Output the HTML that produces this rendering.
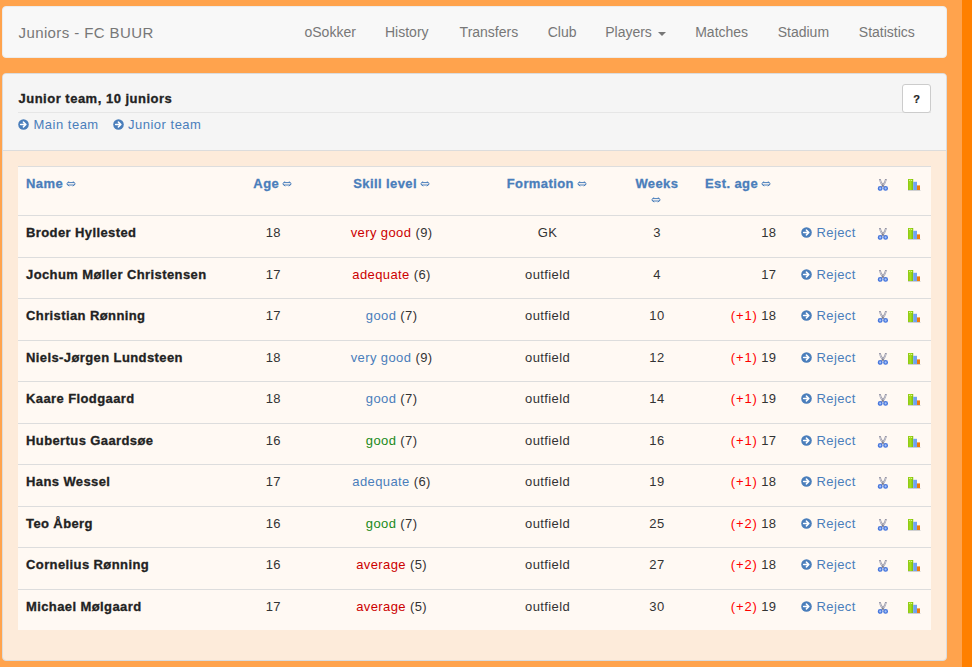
<!DOCTYPE html>
<html><head><meta charset="utf-8">
<style>
*{box-sizing:border-box;margin:0;padding:0}
html,body{width:972px;height:667px;overflow:hidden}
body{background:#ff8000;font-family:"Liberation Sans",sans-serif;position:relative}
#wrap{position:absolute;left:0;top:0;width:962px;height:667px;background:#ffa34d}
.nav{position:absolute;left:2px;top:6px;width:945px;height:52px;background:#f8f8f8;border:1px solid #ececec;border-radius:4px}
.brand{position:absolute;left:15.5px;top:17px;font-size:15px;line-height:18px;color:#777;letter-spacing:0.4px;white-space:nowrap}
.ni{position:absolute;top:23.5px;font-size:14px;line-height:17px;color:#777;white-space:nowrap;letter-spacing:0px}
.caret{position:absolute;left:658px;top:31.5px;width:0;height:0;border-left:4px solid transparent;border-right:4px solid transparent;border-top:4px solid #777}
.panel{position:absolute;left:2px;top:73px;width:945px;height:588px;background:#fdebda;border:1px solid #dcdcdc;border-radius:4px;overflow:hidden}
.ph{position:absolute;left:0;top:0;width:943px;height:77px;background:#f5f5f5;border-bottom:1px solid #dcdcdc}
.h3{position:absolute;left:18.5px;top:90.5px;font-size:13px;line-height:16px;font-weight:bold;color:#222;letter-spacing:0.5px;white-space:nowrap;-webkit-text-stroke:0.3px #222}
.hr{position:absolute;left:18px;top:112px;width:913px;height:1px;background:#e6e6e6}
.lnk{position:absolute;top:117px;font-size:13px;line-height:16px;color:#4a7ebb;white-space:nowrap;letter-spacing:0.5px}
.ic{position:absolute;line-height:0}
.ic svg{display:block}
.help{position:absolute;left:902px;top:84px;width:29px;height:29px;background:#fff;border:1px solid #ccc;border-radius:3px;font-size:11px;font-weight:bold;color:#222;text-align:center;line-height:28px;-webkit-text-stroke:0.2px #222}
.tbl{position:absolute;left:18px;top:166px;width:913px;height:464px;background:#fff9f3;border-top:1px solid #ddd}
.rl{position:absolute;left:18px;width:913px;height:1px;background:#ddd}
.t{position:absolute;font-size:13px;line-height:16px;color:#333;white-space:nowrap;letter-spacing:0.4px}
.th{font-weight:bold;color:#4a7ebb;-webkit-text-stroke:0.3px #4a7ebb}
.arr{vertical-align:0.5px;margin-left:-1px}
.b{font-weight:bold;color:#222;-webkit-text-stroke:0.3px #222}
.ctr{text-align:center}
.rgt{text-align:right}
.red{color:#cc0000}
.blu{color:#4a7ebb}
.grn{color:#1a8a1a}
.plus{color:#f00;letter-spacing:0.9px;margin-right:-0.6px}
</style></head><body>
<div id="wrap">
<div class="nav"><div class="brand">Juniors - FC BUUR</div></div>
<div class="ni" style="left:304.5px">oSokker</div><div class="ni" style="left:385.0px">History</div><div class="ni" style="left:459.6px">Transfers</div><div class="ni" style="left:547.7px">Club</div><div class="ni" style="left:605.2px">Players</div><div class="ni" style="left:695.2px">Matches</div><div class="ni" style="left:777.7px">Stadium</div><div class="ni" style="left:858.8px">Statistics</div><div class="caret"></div>
<div class="panel"><div class="ph"></div></div>
<div class="h3">Junior team, 10 juniors</div><div class="hr"></div>
<div class="ic" style="left:18px;top:119px"><svg class="ci" width="11" height="11" viewBox="0 0 11 11"><circle cx="5.5" cy="5.5" r="5.3" fill="#4a7ebb"/><path d="M2.6 5.5 H7.6 M5.4 3.1 L7.9 5.5 L5.4 7.9" fill="none" stroke="#fff" stroke-width="1.5" stroke-linecap="round" stroke-linejoin="round"/></svg></div><div class="lnk" style="left:33.5px">Main team</div><div class="ic" style="left:112.5px;top:119px"><svg class="ci" width="11" height="11" viewBox="0 0 11 11"><circle cx="5.5" cy="5.5" r="5.3" fill="#4a7ebb"/><path d="M2.6 5.5 H7.6 M5.4 3.1 L7.9 5.5 L5.4 7.9" fill="none" stroke="#fff" stroke-width="1.5" stroke-linecap="round" stroke-linejoin="round"/></svg></div><div class="lnk" style="left:128px">Junior team</div>
<div class="help">?</div>
<div class="tbl"></div>
<div class="t th" style="left:26px;top:175.5px">Name <svg class="arr" width="10" height="6" viewBox="0 0 10 6"><path d="M3.2 0.4 L0.7 2.8 L3.2 5.2 M6.8 0.4 L9.3 2.8 L6.8 5.2 M1.6 1.6 H8.4 M1.6 4.0 H8.4" fill="none" stroke="#4a7ebb" stroke-width="1"/></svg></div><div class="t th ctr" style="left:232.75px;width:80px;top:175.5px">Age <svg class="arr" width="10" height="6" viewBox="0 0 10 6"><path d="M3.2 0.4 L0.7 2.8 L3.2 5.2 M6.8 0.4 L9.3 2.8 L6.8 5.2 M1.6 1.6 H8.4 M1.6 4.0 H8.4" fill="none" stroke="#4a7ebb" stroke-width="1"/></svg></div><div class="t th ctr" style="left:331.6px;width:120px;top:175.5px">Skill level <svg class="arr" width="10" height="6" viewBox="0 0 10 6"><path d="M3.2 0.4 L0.7 2.8 L3.2 5.2 M6.8 0.4 L9.3 2.8 L6.8 5.2 M1.6 1.6 H8.4 M1.6 4.0 H8.4" fill="none" stroke="#4a7ebb" stroke-width="1"/></svg></div><div class="t th ctr" style="left:486.8px;width:120px;top:175.5px">Formation <svg class="arr" width="10" height="6" viewBox="0 0 10 6"><path d="M3.2 0.4 L0.7 2.8 L3.2 5.2 M6.8 0.4 L9.3 2.8 L6.8 5.2 M1.6 1.6 H8.4 M1.6 4.0 H8.4" fill="none" stroke="#4a7ebb" stroke-width="1"/></svg></div><div class="t th ctr" style="left:616.9px;width:80px;top:175.5px">Weeks<br><svg class="arr" width="10" height="6" viewBox="0 0 10 6"><path d="M3.2 0.4 L0.7 2.8 L3.2 5.2 M6.8 0.4 L9.3 2.8 L6.8 5.2 M1.6 1.6 H8.4 M1.6 4.0 H8.4" fill="none" stroke="#4a7ebb" stroke-width="1"/></svg></div><div class="t th" style="left:705px;top:175.5px">Est. age <svg class="arr" width="10" height="6" viewBox="0 0 10 6"><path d="M3.2 0.4 L0.7 2.8 L3.2 5.2 M6.8 0.4 L9.3 2.8 L6.8 5.2 M1.6 1.6 H8.4 M1.6 4.0 H8.4" fill="none" stroke="#4a7ebb" stroke-width="1"/></svg></div><div class="ic" style="left:877px;top:179px"><svg class="sc" width="12" height="13" viewBox="0 0 12 13"><path d="M2.9 0.4 Q3.2 3.6 6.6 7.4 M8.9 0.4 Q8.6 3.6 5.2 7.4" stroke="#9494a4" stroke-width="1.8" fill="none" stroke-linecap="round"/><path d="M2.9 0.9 Q3.2 3.6 6.3 7.0 M8.9 0.9 Q8.6 3.6 5.5 7.0" stroke="#f0f0f6" stroke-width="0.6" fill="none"/><circle cx="5.9" cy="6.2" r="0.7" fill="#556"/><circle cx="3.2" cy="9.4" r="1.75" fill="#a8c4f8" stroke="#4676dc" stroke-width="1.4"/><circle cx="8.6" cy="9.4" r="1.75" fill="#a8c4f8" stroke="#4676dc" stroke-width="1.4"/></svg></div><div class="ic" style="left:908px;top:179px"><svg class="bc" width="13" height="12" viewBox="0 0 13 12"><defs><linearGradient id="gg" x1="0" y1="0" x2="1" y2="0"><stop offset="0" stop-color="#8cc814"/><stop offset="0.5" stop-color="#a6de1e"/><stop offset="1" stop-color="#78b80a"/></linearGradient></defs><rect x="0" y="11" width="12.5" height="1" fill="#d0d0d0"/><rect x="0" y="0" width="5.2" height="11" fill="url(#gg)"/><rect x="1" y="1" width="1.2" height="1" fill="#d8f490"/><rect x="3" y="1" width="1.2" height="1" fill="#d8f490"/><rect x="5.2" y="2.8" width="3.8" height="8.2" fill="#70a2f2"/><rect x="9" y="6.4" width="3" height="4.6" fill="#ee7a0e"/></svg></div>
<div class="rl" style="top:215.00px"></div><div class="t b" style="left:26px;top:225.20px">Broder Hyllested</div><div class="t ctr" style="left:233.3px;width:80px;top:225.20px">18</div><div class="t ctr" style="left:331.6px;width:120px;top:225.20px"><span class="red">very good</span> (9)</div><div class="t ctr" style="left:487.6px;width:120px;top:225.20px">GK</div><div class="t ctr" style="left:617px;width:80px;top:225.20px">3</div><div class="t rgt" style="left:676.5px;width:100px;top:225.20px">18</div><div class="ic" style="left:801px;top:226.80px"><svg class="ci" width="11" height="11" viewBox="0 0 11 11"><circle cx="5.5" cy="5.5" r="5.3" fill="#4a7ebb"/><path d="M2.6 5.5 H7.6 M5.4 3.1 L7.9 5.5 L5.4 7.9" fill="none" stroke="#fff" stroke-width="1.5" stroke-linecap="round" stroke-linejoin="round"/></svg></div><div class="t blu" style="left:816.5px;top:225.20px">Reject</div><div class="ic" style="left:877px;top:228.00px"><svg class="sc" width="12" height="13" viewBox="0 0 12 13"><path d="M2.9 0.4 Q3.2 3.6 6.6 7.4 M8.9 0.4 Q8.6 3.6 5.2 7.4" stroke="#9494a4" stroke-width="1.8" fill="none" stroke-linecap="round"/><path d="M2.9 0.9 Q3.2 3.6 6.3 7.0 M8.9 0.9 Q8.6 3.6 5.5 7.0" stroke="#f0f0f6" stroke-width="0.6" fill="none"/><circle cx="5.9" cy="6.2" r="0.7" fill="#556"/><circle cx="3.2" cy="9.4" r="1.75" fill="#a8c4f8" stroke="#4676dc" stroke-width="1.4"/><circle cx="8.6" cy="9.4" r="1.75" fill="#a8c4f8" stroke="#4676dc" stroke-width="1.4"/></svg></div><div class="ic" style="left:908px;top:228.00px"><svg class="bc" width="13" height="12" viewBox="0 0 13 12"><defs><linearGradient id="gg" x1="0" y1="0" x2="1" y2="0"><stop offset="0" stop-color="#8cc814"/><stop offset="0.5" stop-color="#a6de1e"/><stop offset="1" stop-color="#78b80a"/></linearGradient></defs><rect x="0" y="11" width="12.5" height="1" fill="#d0d0d0"/><rect x="0" y="0" width="5.2" height="11" fill="url(#gg)"/><rect x="1" y="1" width="1.2" height="1" fill="#d8f490"/><rect x="3" y="1" width="1.2" height="1" fill="#d8f490"/><rect x="5.2" y="2.8" width="3.8" height="8.2" fill="#70a2f2"/><rect x="9" y="6.4" width="3" height="4.6" fill="#ee7a0e"/></svg></div>
<div class="rl" style="top:257.00px"></div><div class="t b" style="left:26px;top:267.20px">Jochum Møller Christensen</div><div class="t ctr" style="left:233.3px;width:80px;top:267.20px">17</div><div class="t ctr" style="left:331.6px;width:120px;top:267.20px"><span class="red">adequate</span> (6)</div><div class="t ctr" style="left:487.6px;width:120px;top:267.20px">outfield</div><div class="t ctr" style="left:617px;width:80px;top:267.20px">4</div><div class="t rgt" style="left:676.5px;width:100px;top:267.20px">17</div><div class="ic" style="left:801px;top:268.80px"><svg class="ci" width="11" height="11" viewBox="0 0 11 11"><circle cx="5.5" cy="5.5" r="5.3" fill="#4a7ebb"/><path d="M2.6 5.5 H7.6 M5.4 3.1 L7.9 5.5 L5.4 7.9" fill="none" stroke="#fff" stroke-width="1.5" stroke-linecap="round" stroke-linejoin="round"/></svg></div><div class="t blu" style="left:816.5px;top:267.20px">Reject</div><div class="ic" style="left:877px;top:270.00px"><svg class="sc" width="12" height="13" viewBox="0 0 12 13"><path d="M2.9 0.4 Q3.2 3.6 6.6 7.4 M8.9 0.4 Q8.6 3.6 5.2 7.4" stroke="#9494a4" stroke-width="1.8" fill="none" stroke-linecap="round"/><path d="M2.9 0.9 Q3.2 3.6 6.3 7.0 M8.9 0.9 Q8.6 3.6 5.5 7.0" stroke="#f0f0f6" stroke-width="0.6" fill="none"/><circle cx="5.9" cy="6.2" r="0.7" fill="#556"/><circle cx="3.2" cy="9.4" r="1.75" fill="#a8c4f8" stroke="#4676dc" stroke-width="1.4"/><circle cx="8.6" cy="9.4" r="1.75" fill="#a8c4f8" stroke="#4676dc" stroke-width="1.4"/></svg></div><div class="ic" style="left:908px;top:270.00px"><svg class="bc" width="13" height="12" viewBox="0 0 13 12"><defs><linearGradient id="gg" x1="0" y1="0" x2="1" y2="0"><stop offset="0" stop-color="#8cc814"/><stop offset="0.5" stop-color="#a6de1e"/><stop offset="1" stop-color="#78b80a"/></linearGradient></defs><rect x="0" y="11" width="12.5" height="1" fill="#d0d0d0"/><rect x="0" y="0" width="5.2" height="11" fill="url(#gg)"/><rect x="1" y="1" width="1.2" height="1" fill="#d8f490"/><rect x="3" y="1" width="1.2" height="1" fill="#d8f490"/><rect x="5.2" y="2.8" width="3.8" height="8.2" fill="#70a2f2"/><rect x="9" y="6.4" width="3" height="4.6" fill="#ee7a0e"/></svg></div>
<div class="rl" style="top:298.00px"></div><div class="t b" style="left:26px;top:308.20px">Christian Rønning</div><div class="t ctr" style="left:233.3px;width:80px;top:308.20px">17</div><div class="t ctr" style="left:331.6px;width:120px;top:308.20px"><span class="blu">good</span> (7)</div><div class="t ctr" style="left:487.6px;width:120px;top:308.20px">outfield</div><div class="t ctr" style="left:617px;width:80px;top:308.20px">10</div><div class="t rgt" style="left:676.5px;width:100px;top:308.20px"><span class="plus">(+1)</span> 18</div><div class="ic" style="left:801px;top:309.80px"><svg class="ci" width="11" height="11" viewBox="0 0 11 11"><circle cx="5.5" cy="5.5" r="5.3" fill="#4a7ebb"/><path d="M2.6 5.5 H7.6 M5.4 3.1 L7.9 5.5 L5.4 7.9" fill="none" stroke="#fff" stroke-width="1.5" stroke-linecap="round" stroke-linejoin="round"/></svg></div><div class="t blu" style="left:816.5px;top:308.20px">Reject</div><div class="ic" style="left:877px;top:311.00px"><svg class="sc" width="12" height="13" viewBox="0 0 12 13"><path d="M2.9 0.4 Q3.2 3.6 6.6 7.4 M8.9 0.4 Q8.6 3.6 5.2 7.4" stroke="#9494a4" stroke-width="1.8" fill="none" stroke-linecap="round"/><path d="M2.9 0.9 Q3.2 3.6 6.3 7.0 M8.9 0.9 Q8.6 3.6 5.5 7.0" stroke="#f0f0f6" stroke-width="0.6" fill="none"/><circle cx="5.9" cy="6.2" r="0.7" fill="#556"/><circle cx="3.2" cy="9.4" r="1.75" fill="#a8c4f8" stroke="#4676dc" stroke-width="1.4"/><circle cx="8.6" cy="9.4" r="1.75" fill="#a8c4f8" stroke="#4676dc" stroke-width="1.4"/></svg></div><div class="ic" style="left:908px;top:311.00px"><svg class="bc" width="13" height="12" viewBox="0 0 13 12"><defs><linearGradient id="gg" x1="0" y1="0" x2="1" y2="0"><stop offset="0" stop-color="#8cc814"/><stop offset="0.5" stop-color="#a6de1e"/><stop offset="1" stop-color="#78b80a"/></linearGradient></defs><rect x="0" y="11" width="12.5" height="1" fill="#d0d0d0"/><rect x="0" y="0" width="5.2" height="11" fill="url(#gg)"/><rect x="1" y="1" width="1.2" height="1" fill="#d8f490"/><rect x="3" y="1" width="1.2" height="1" fill="#d8f490"/><rect x="5.2" y="2.8" width="3.8" height="8.2" fill="#70a2f2"/><rect x="9" y="6.4" width="3" height="4.6" fill="#ee7a0e"/></svg></div>
<div class="rl" style="top:340.00px"></div><div class="t b" style="left:26px;top:350.20px">Niels-Jørgen Lundsteen</div><div class="t ctr" style="left:233.3px;width:80px;top:350.20px">18</div><div class="t ctr" style="left:331.6px;width:120px;top:350.20px"><span class="blu">very good</span> (9)</div><div class="t ctr" style="left:487.6px;width:120px;top:350.20px">outfield</div><div class="t ctr" style="left:617px;width:80px;top:350.20px">12</div><div class="t rgt" style="left:676.5px;width:100px;top:350.20px"><span class="plus">(+1)</span> 19</div><div class="ic" style="left:801px;top:351.80px"><svg class="ci" width="11" height="11" viewBox="0 0 11 11"><circle cx="5.5" cy="5.5" r="5.3" fill="#4a7ebb"/><path d="M2.6 5.5 H7.6 M5.4 3.1 L7.9 5.5 L5.4 7.9" fill="none" stroke="#fff" stroke-width="1.5" stroke-linecap="round" stroke-linejoin="round"/></svg></div><div class="t blu" style="left:816.5px;top:350.20px">Reject</div><div class="ic" style="left:877px;top:353.00px"><svg class="sc" width="12" height="13" viewBox="0 0 12 13"><path d="M2.9 0.4 Q3.2 3.6 6.6 7.4 M8.9 0.4 Q8.6 3.6 5.2 7.4" stroke="#9494a4" stroke-width="1.8" fill="none" stroke-linecap="round"/><path d="M2.9 0.9 Q3.2 3.6 6.3 7.0 M8.9 0.9 Q8.6 3.6 5.5 7.0" stroke="#f0f0f6" stroke-width="0.6" fill="none"/><circle cx="5.9" cy="6.2" r="0.7" fill="#556"/><circle cx="3.2" cy="9.4" r="1.75" fill="#a8c4f8" stroke="#4676dc" stroke-width="1.4"/><circle cx="8.6" cy="9.4" r="1.75" fill="#a8c4f8" stroke="#4676dc" stroke-width="1.4"/></svg></div><div class="ic" style="left:908px;top:353.00px"><svg class="bc" width="13" height="12" viewBox="0 0 13 12"><defs><linearGradient id="gg" x1="0" y1="0" x2="1" y2="0"><stop offset="0" stop-color="#8cc814"/><stop offset="0.5" stop-color="#a6de1e"/><stop offset="1" stop-color="#78b80a"/></linearGradient></defs><rect x="0" y="11" width="12.5" height="1" fill="#d0d0d0"/><rect x="0" y="0" width="5.2" height="11" fill="url(#gg)"/><rect x="1" y="1" width="1.2" height="1" fill="#d8f490"/><rect x="3" y="1" width="1.2" height="1" fill="#d8f490"/><rect x="5.2" y="2.8" width="3.8" height="8.2" fill="#70a2f2"/><rect x="9" y="6.4" width="3" height="4.6" fill="#ee7a0e"/></svg></div>
<div class="rl" style="top:381.00px"></div><div class="t b" style="left:26px;top:391.20px">Kaare Flodgaard</div><div class="t ctr" style="left:233.3px;width:80px;top:391.20px">18</div><div class="t ctr" style="left:331.6px;width:120px;top:391.20px"><span class="blu">good</span> (7)</div><div class="t ctr" style="left:487.6px;width:120px;top:391.20px">outfield</div><div class="t ctr" style="left:617px;width:80px;top:391.20px">14</div><div class="t rgt" style="left:676.5px;width:100px;top:391.20px"><span class="plus">(+1)</span> 19</div><div class="ic" style="left:801px;top:392.80px"><svg class="ci" width="11" height="11" viewBox="0 0 11 11"><circle cx="5.5" cy="5.5" r="5.3" fill="#4a7ebb"/><path d="M2.6 5.5 H7.6 M5.4 3.1 L7.9 5.5 L5.4 7.9" fill="none" stroke="#fff" stroke-width="1.5" stroke-linecap="round" stroke-linejoin="round"/></svg></div><div class="t blu" style="left:816.5px;top:391.20px">Reject</div><div class="ic" style="left:877px;top:394.00px"><svg class="sc" width="12" height="13" viewBox="0 0 12 13"><path d="M2.9 0.4 Q3.2 3.6 6.6 7.4 M8.9 0.4 Q8.6 3.6 5.2 7.4" stroke="#9494a4" stroke-width="1.8" fill="none" stroke-linecap="round"/><path d="M2.9 0.9 Q3.2 3.6 6.3 7.0 M8.9 0.9 Q8.6 3.6 5.5 7.0" stroke="#f0f0f6" stroke-width="0.6" fill="none"/><circle cx="5.9" cy="6.2" r="0.7" fill="#556"/><circle cx="3.2" cy="9.4" r="1.75" fill="#a8c4f8" stroke="#4676dc" stroke-width="1.4"/><circle cx="8.6" cy="9.4" r="1.75" fill="#a8c4f8" stroke="#4676dc" stroke-width="1.4"/></svg></div><div class="ic" style="left:908px;top:394.00px"><svg class="bc" width="13" height="12" viewBox="0 0 13 12"><defs><linearGradient id="gg" x1="0" y1="0" x2="1" y2="0"><stop offset="0" stop-color="#8cc814"/><stop offset="0.5" stop-color="#a6de1e"/><stop offset="1" stop-color="#78b80a"/></linearGradient></defs><rect x="0" y="11" width="12.5" height="1" fill="#d0d0d0"/><rect x="0" y="0" width="5.2" height="11" fill="url(#gg)"/><rect x="1" y="1" width="1.2" height="1" fill="#d8f490"/><rect x="3" y="1" width="1.2" height="1" fill="#d8f490"/><rect x="5.2" y="2.8" width="3.8" height="8.2" fill="#70a2f2"/><rect x="9" y="6.4" width="3" height="4.6" fill="#ee7a0e"/></svg></div>
<div class="rl" style="top:423.00px"></div><div class="t b" style="left:26px;top:433.20px">Hubertus Gaardsøe</div><div class="t ctr" style="left:233.3px;width:80px;top:433.20px">16</div><div class="t ctr" style="left:331.6px;width:120px;top:433.20px"><span class="grn">good</span> (7)</div><div class="t ctr" style="left:487.6px;width:120px;top:433.20px">outfield</div><div class="t ctr" style="left:617px;width:80px;top:433.20px">16</div><div class="t rgt" style="left:676.5px;width:100px;top:433.20px"><span class="plus">(+1)</span> 17</div><div class="ic" style="left:801px;top:434.80px"><svg class="ci" width="11" height="11" viewBox="0 0 11 11"><circle cx="5.5" cy="5.5" r="5.3" fill="#4a7ebb"/><path d="M2.6 5.5 H7.6 M5.4 3.1 L7.9 5.5 L5.4 7.9" fill="none" stroke="#fff" stroke-width="1.5" stroke-linecap="round" stroke-linejoin="round"/></svg></div><div class="t blu" style="left:816.5px;top:433.20px">Reject</div><div class="ic" style="left:877px;top:436.00px"><svg class="sc" width="12" height="13" viewBox="0 0 12 13"><path d="M2.9 0.4 Q3.2 3.6 6.6 7.4 M8.9 0.4 Q8.6 3.6 5.2 7.4" stroke="#9494a4" stroke-width="1.8" fill="none" stroke-linecap="round"/><path d="M2.9 0.9 Q3.2 3.6 6.3 7.0 M8.9 0.9 Q8.6 3.6 5.5 7.0" stroke="#f0f0f6" stroke-width="0.6" fill="none"/><circle cx="5.9" cy="6.2" r="0.7" fill="#556"/><circle cx="3.2" cy="9.4" r="1.75" fill="#a8c4f8" stroke="#4676dc" stroke-width="1.4"/><circle cx="8.6" cy="9.4" r="1.75" fill="#a8c4f8" stroke="#4676dc" stroke-width="1.4"/></svg></div><div class="ic" style="left:908px;top:436.00px"><svg class="bc" width="13" height="12" viewBox="0 0 13 12"><defs><linearGradient id="gg" x1="0" y1="0" x2="1" y2="0"><stop offset="0" stop-color="#8cc814"/><stop offset="0.5" stop-color="#a6de1e"/><stop offset="1" stop-color="#78b80a"/></linearGradient></defs><rect x="0" y="11" width="12.5" height="1" fill="#d0d0d0"/><rect x="0" y="0" width="5.2" height="11" fill="url(#gg)"/><rect x="1" y="1" width="1.2" height="1" fill="#d8f490"/><rect x="3" y="1" width="1.2" height="1" fill="#d8f490"/><rect x="5.2" y="2.8" width="3.8" height="8.2" fill="#70a2f2"/><rect x="9" y="6.4" width="3" height="4.6" fill="#ee7a0e"/></svg></div>
<div class="rl" style="top:464.00px"></div><div class="t b" style="left:26px;top:474.20px">Hans Wessel</div><div class="t ctr" style="left:233.3px;width:80px;top:474.20px">17</div><div class="t ctr" style="left:331.6px;width:120px;top:474.20px"><span class="blu">adequate</span> (6)</div><div class="t ctr" style="left:487.6px;width:120px;top:474.20px">outfield</div><div class="t ctr" style="left:617px;width:80px;top:474.20px">19</div><div class="t rgt" style="left:676.5px;width:100px;top:474.20px"><span class="plus">(+1)</span> 18</div><div class="ic" style="left:801px;top:475.80px"><svg class="ci" width="11" height="11" viewBox="0 0 11 11"><circle cx="5.5" cy="5.5" r="5.3" fill="#4a7ebb"/><path d="M2.6 5.5 H7.6 M5.4 3.1 L7.9 5.5 L5.4 7.9" fill="none" stroke="#fff" stroke-width="1.5" stroke-linecap="round" stroke-linejoin="round"/></svg></div><div class="t blu" style="left:816.5px;top:474.20px">Reject</div><div class="ic" style="left:877px;top:477.00px"><svg class="sc" width="12" height="13" viewBox="0 0 12 13"><path d="M2.9 0.4 Q3.2 3.6 6.6 7.4 M8.9 0.4 Q8.6 3.6 5.2 7.4" stroke="#9494a4" stroke-width="1.8" fill="none" stroke-linecap="round"/><path d="M2.9 0.9 Q3.2 3.6 6.3 7.0 M8.9 0.9 Q8.6 3.6 5.5 7.0" stroke="#f0f0f6" stroke-width="0.6" fill="none"/><circle cx="5.9" cy="6.2" r="0.7" fill="#556"/><circle cx="3.2" cy="9.4" r="1.75" fill="#a8c4f8" stroke="#4676dc" stroke-width="1.4"/><circle cx="8.6" cy="9.4" r="1.75" fill="#a8c4f8" stroke="#4676dc" stroke-width="1.4"/></svg></div><div class="ic" style="left:908px;top:477.00px"><svg class="bc" width="13" height="12" viewBox="0 0 13 12"><defs><linearGradient id="gg" x1="0" y1="0" x2="1" y2="0"><stop offset="0" stop-color="#8cc814"/><stop offset="0.5" stop-color="#a6de1e"/><stop offset="1" stop-color="#78b80a"/></linearGradient></defs><rect x="0" y="11" width="12.5" height="1" fill="#d0d0d0"/><rect x="0" y="0" width="5.2" height="11" fill="url(#gg)"/><rect x="1" y="1" width="1.2" height="1" fill="#d8f490"/><rect x="3" y="1" width="1.2" height="1" fill="#d8f490"/><rect x="5.2" y="2.8" width="3.8" height="8.2" fill="#70a2f2"/><rect x="9" y="6.4" width="3" height="4.6" fill="#ee7a0e"/></svg></div>
<div class="rl" style="top:506.00px"></div><div class="t b" style="left:26px;top:516.20px">Teo Åberg</div><div class="t ctr" style="left:233.3px;width:80px;top:516.20px">16</div><div class="t ctr" style="left:331.6px;width:120px;top:516.20px"><span class="grn">good</span> (7)</div><div class="t ctr" style="left:487.6px;width:120px;top:516.20px">outfield</div><div class="t ctr" style="left:617px;width:80px;top:516.20px">25</div><div class="t rgt" style="left:676.5px;width:100px;top:516.20px"><span class="plus">(+2)</span> 18</div><div class="ic" style="left:801px;top:517.80px"><svg class="ci" width="11" height="11" viewBox="0 0 11 11"><circle cx="5.5" cy="5.5" r="5.3" fill="#4a7ebb"/><path d="M2.6 5.5 H7.6 M5.4 3.1 L7.9 5.5 L5.4 7.9" fill="none" stroke="#fff" stroke-width="1.5" stroke-linecap="round" stroke-linejoin="round"/></svg></div><div class="t blu" style="left:816.5px;top:516.20px">Reject</div><div class="ic" style="left:877px;top:519.00px"><svg class="sc" width="12" height="13" viewBox="0 0 12 13"><path d="M2.9 0.4 Q3.2 3.6 6.6 7.4 M8.9 0.4 Q8.6 3.6 5.2 7.4" stroke="#9494a4" stroke-width="1.8" fill="none" stroke-linecap="round"/><path d="M2.9 0.9 Q3.2 3.6 6.3 7.0 M8.9 0.9 Q8.6 3.6 5.5 7.0" stroke="#f0f0f6" stroke-width="0.6" fill="none"/><circle cx="5.9" cy="6.2" r="0.7" fill="#556"/><circle cx="3.2" cy="9.4" r="1.75" fill="#a8c4f8" stroke="#4676dc" stroke-width="1.4"/><circle cx="8.6" cy="9.4" r="1.75" fill="#a8c4f8" stroke="#4676dc" stroke-width="1.4"/></svg></div><div class="ic" style="left:908px;top:519.00px"><svg class="bc" width="13" height="12" viewBox="0 0 13 12"><defs><linearGradient id="gg" x1="0" y1="0" x2="1" y2="0"><stop offset="0" stop-color="#8cc814"/><stop offset="0.5" stop-color="#a6de1e"/><stop offset="1" stop-color="#78b80a"/></linearGradient></defs><rect x="0" y="11" width="12.5" height="1" fill="#d0d0d0"/><rect x="0" y="0" width="5.2" height="11" fill="url(#gg)"/><rect x="1" y="1" width="1.2" height="1" fill="#d8f490"/><rect x="3" y="1" width="1.2" height="1" fill="#d8f490"/><rect x="5.2" y="2.8" width="3.8" height="8.2" fill="#70a2f2"/><rect x="9" y="6.4" width="3" height="4.6" fill="#ee7a0e"/></svg></div>
<div class="rl" style="top:547.00px"></div><div class="t b" style="left:26px;top:557.20px">Cornelius Rønning</div><div class="t ctr" style="left:233.3px;width:80px;top:557.20px">16</div><div class="t ctr" style="left:331.6px;width:120px;top:557.20px"><span class="red">average</span> (5)</div><div class="t ctr" style="left:487.6px;width:120px;top:557.20px">outfield</div><div class="t ctr" style="left:617px;width:80px;top:557.20px">27</div><div class="t rgt" style="left:676.5px;width:100px;top:557.20px"><span class="plus">(+2)</span> 18</div><div class="ic" style="left:801px;top:558.80px"><svg class="ci" width="11" height="11" viewBox="0 0 11 11"><circle cx="5.5" cy="5.5" r="5.3" fill="#4a7ebb"/><path d="M2.6 5.5 H7.6 M5.4 3.1 L7.9 5.5 L5.4 7.9" fill="none" stroke="#fff" stroke-width="1.5" stroke-linecap="round" stroke-linejoin="round"/></svg></div><div class="t blu" style="left:816.5px;top:557.20px">Reject</div><div class="ic" style="left:877px;top:560.00px"><svg class="sc" width="12" height="13" viewBox="0 0 12 13"><path d="M2.9 0.4 Q3.2 3.6 6.6 7.4 M8.9 0.4 Q8.6 3.6 5.2 7.4" stroke="#9494a4" stroke-width="1.8" fill="none" stroke-linecap="round"/><path d="M2.9 0.9 Q3.2 3.6 6.3 7.0 M8.9 0.9 Q8.6 3.6 5.5 7.0" stroke="#f0f0f6" stroke-width="0.6" fill="none"/><circle cx="5.9" cy="6.2" r="0.7" fill="#556"/><circle cx="3.2" cy="9.4" r="1.75" fill="#a8c4f8" stroke="#4676dc" stroke-width="1.4"/><circle cx="8.6" cy="9.4" r="1.75" fill="#a8c4f8" stroke="#4676dc" stroke-width="1.4"/></svg></div><div class="ic" style="left:908px;top:560.00px"><svg class="bc" width="13" height="12" viewBox="0 0 13 12"><defs><linearGradient id="gg" x1="0" y1="0" x2="1" y2="0"><stop offset="0" stop-color="#8cc814"/><stop offset="0.5" stop-color="#a6de1e"/><stop offset="1" stop-color="#78b80a"/></linearGradient></defs><rect x="0" y="11" width="12.5" height="1" fill="#d0d0d0"/><rect x="0" y="0" width="5.2" height="11" fill="url(#gg)"/><rect x="1" y="1" width="1.2" height="1" fill="#d8f490"/><rect x="3" y="1" width="1.2" height="1" fill="#d8f490"/><rect x="5.2" y="2.8" width="3.8" height="8.2" fill="#70a2f2"/><rect x="9" y="6.4" width="3" height="4.6" fill="#ee7a0e"/></svg></div>
<div class="rl" style="top:589.00px"></div><div class="t b" style="left:26px;top:599.20px">Michael Mølgaard</div><div class="t ctr" style="left:233.3px;width:80px;top:599.20px">17</div><div class="t ctr" style="left:331.6px;width:120px;top:599.20px"><span class="red">average</span> (5)</div><div class="t ctr" style="left:487.6px;width:120px;top:599.20px">outfield</div><div class="t ctr" style="left:617px;width:80px;top:599.20px">30</div><div class="t rgt" style="left:676.5px;width:100px;top:599.20px"><span class="plus">(+2)</span> 19</div><div class="ic" style="left:801px;top:600.80px"><svg class="ci" width="11" height="11" viewBox="0 0 11 11"><circle cx="5.5" cy="5.5" r="5.3" fill="#4a7ebb"/><path d="M2.6 5.5 H7.6 M5.4 3.1 L7.9 5.5 L5.4 7.9" fill="none" stroke="#fff" stroke-width="1.5" stroke-linecap="round" stroke-linejoin="round"/></svg></div><div class="t blu" style="left:816.5px;top:599.20px">Reject</div><div class="ic" style="left:877px;top:602.00px"><svg class="sc" width="12" height="13" viewBox="0 0 12 13"><path d="M2.9 0.4 Q3.2 3.6 6.6 7.4 M8.9 0.4 Q8.6 3.6 5.2 7.4" stroke="#9494a4" stroke-width="1.8" fill="none" stroke-linecap="round"/><path d="M2.9 0.9 Q3.2 3.6 6.3 7.0 M8.9 0.9 Q8.6 3.6 5.5 7.0" stroke="#f0f0f6" stroke-width="0.6" fill="none"/><circle cx="5.9" cy="6.2" r="0.7" fill="#556"/><circle cx="3.2" cy="9.4" r="1.75" fill="#a8c4f8" stroke="#4676dc" stroke-width="1.4"/><circle cx="8.6" cy="9.4" r="1.75" fill="#a8c4f8" stroke="#4676dc" stroke-width="1.4"/></svg></div><div class="ic" style="left:908px;top:602.00px"><svg class="bc" width="13" height="12" viewBox="0 0 13 12"><defs><linearGradient id="gg" x1="0" y1="0" x2="1" y2="0"><stop offset="0" stop-color="#8cc814"/><stop offset="0.5" stop-color="#a6de1e"/><stop offset="1" stop-color="#78b80a"/></linearGradient></defs><rect x="0" y="11" width="12.5" height="1" fill="#d0d0d0"/><rect x="0" y="0" width="5.2" height="11" fill="url(#gg)"/><rect x="1" y="1" width="1.2" height="1" fill="#d8f490"/><rect x="3" y="1" width="1.2" height="1" fill="#d8f490"/><rect x="5.2" y="2.8" width="3.8" height="8.2" fill="#70a2f2"/><rect x="9" y="6.4" width="3" height="4.6" fill="#ee7a0e"/></svg></div>
</div>
</body></html>
